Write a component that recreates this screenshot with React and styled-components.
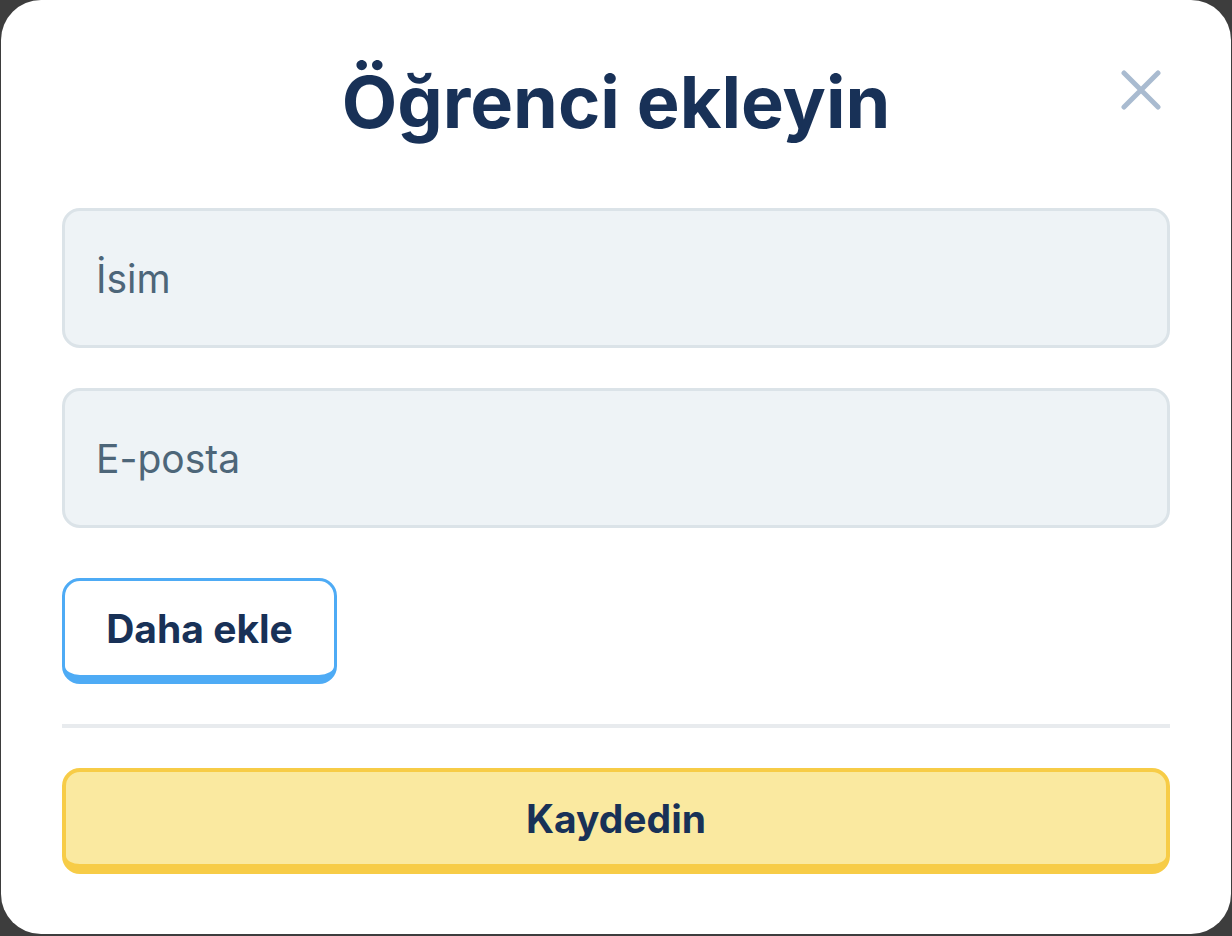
import React from "react";
import styled, { createGlobalStyle } from "styled-components";

const Global = createGlobalStyle`
  html, body { margin: 0; padding: 0; background: #3d3d3d; }
  body { font-family: Inter, "Noto Sans", sans-serif; }
  * { box-sizing: border-box; }
`;

const Modal = styled.div`
  position: relative;
  margin: 0 1px;
  height: 934px;
  background: #ffffff;
  border-radius: 40px;
  padding: 0 61px;
  display: flex;
  flex-direction: column;
`;

const Header = styled.div`
  height: 208px;
  display: flex;
  justify-content: center;
  padding-top: 58px;
`;

const Title = styled.h1`
  margin: 0;
  font-size: 72px;
  line-height: 88px;
  font-weight: 700;
  color: #183157;
  letter-spacing: 0;
`;

const CloseButton = styled.button`
  position: absolute;
  top: 70px;
  right: 70px;
  width: 40px;
  height: 40px;
  padding: 0;
  border: none;
  background: transparent;
  display: flex;
  align-items: center;
  justify-content: center;
  cursor: pointer;
`;

const Fields = styled.div`
  display: flex;
  flex-direction: column;
  gap: 40px;
`;

const Input = styled.input`
  height: 140px;
  width: 100%;
  border: 3px solid #dbe3e8;
  border-radius: 18px;
  background: #eef3f6;
  padding: 0 0 0 31px;
  font-family: Inter, "Noto Sans", sans-serif;
  font-size: 39px;
  color: #183157;
  outline: none;
  &::placeholder { color: #4d6679; }
`;

const Button = styled.button`
  height: 106px;
  border-radius: 18px;
  border: ${p => p.$bw}px solid ${p => p.$border};
  border-bottom-width: ${p => p.$bb}px;
  background: ${p => p.$bg};
  color: #183157;
  font-family: Inter, "Noto Sans", sans-serif;
  font-size: 39px;
  font-weight: 700;
  padding: 0;
  cursor: pointer;
`;

const AddMore = styled(Button)`
  margin-top: 50px;
  width: 275px;
  align-self: flex-start;
`;

const Divider = styled.hr`
  margin: 40px 0 0;
  border: none;
  height: 4px;
  background: #e8ebee;
`;

const Save = styled(Button)`
  margin-top: 40px;
  width: 100%;
`;

export default function App() {
  return (
    <>
      <Global />
      <Modal>
        <Header>
          <Title>Öğrenci ekleyin</Title>
        </Header>
        <CloseButton aria-label="Kapat">
          <svg width="40" height="40" viewBox="0 0 40 40">
            <path d="M3 3 L37 37 M37 3 L3 37" stroke="#a9bbd0" strokeWidth="5" strokeLinecap="round" />
          </svg>
        </CloseButton>
        <Fields>
          <Input placeholder="İsim" />
          <Input placeholder="E-posta" />
        </Fields>
        <AddMore $bw={3} $bb={9} $border="#4eabf5" $bg="#ffffff">Daha ekle</AddMore>
        <Divider />
        <Save $bw={4} $bb={10} $border="#f7cc47" $bg="#fae9a0">Kaydedin</Save>
      </Modal>
    </>
  );
}
